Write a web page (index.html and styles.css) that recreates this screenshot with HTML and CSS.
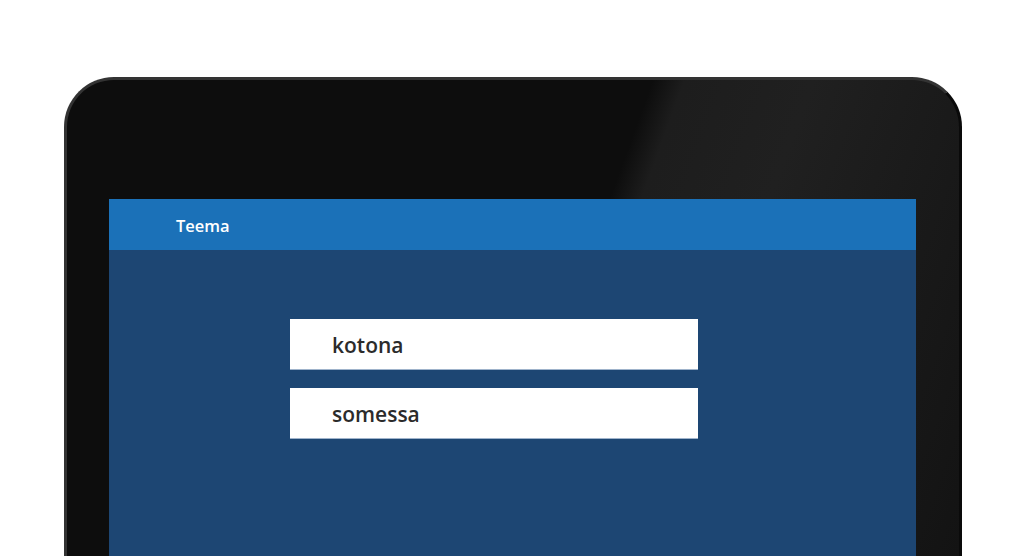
FILE: index.html
```html
<!DOCTYPE html>
<html lang="fi">
<head>
  <meta charset="UTF-8">
  <meta name="viewport" content="width=1024, initial-scale=1.0">
  <title>Teema</title>
  <link rel="stylesheet" href="styles.css">
</head>
<body>
  <div class="device">
    <div class="screen">
      <div class="topbar">Teema</div>
      <div class="content">
        <div class="choice">kotona</div>
        <div class="choice">somessa</div>
      </div>
    </div>
  </div>
</body>
</html>
```
FILE: styles.css
```css
html, body { height:100%; }
body { margin:0; background:#fff; font-family:'Open Sans', 'Noto Sans', Arial, sans-serif; overflow:hidden; }
.device { box-sizing:border-box; margin:77px 0 0 64px; width:898px; height:479px; padding:119px 43px 0 42px;
  border:3px solid #333; border-right-color:#0a0a0a; border-bottom:none; border-radius:50px 50px 0 0;
  background:linear-gradient(110deg, #0d0d0d 0%, #0d0d0d 55%, #1d1d1d 58%, #202020 70%, #131313 100%); }
.screen { height:100%; background:#1d4673; display:flex; flex-direction:column; }
.topbar { height:51px; line-height:54px; padding-left:67px; background:#1b71b8; color:#fff; font-size:16.5px; font-weight:600; }
.content { padding:69px 0 0 181px; display:flex; flex-direction:column; gap:19px; }
.choice { box-sizing:border-box; width:408px; height:50px; line-height:52px; padding-left:42px; background:#fff;
  color:#2b2b2b; font-size:21px; font-weight:600; box-shadow:0 1px 0 #9fb3cb; }
```
